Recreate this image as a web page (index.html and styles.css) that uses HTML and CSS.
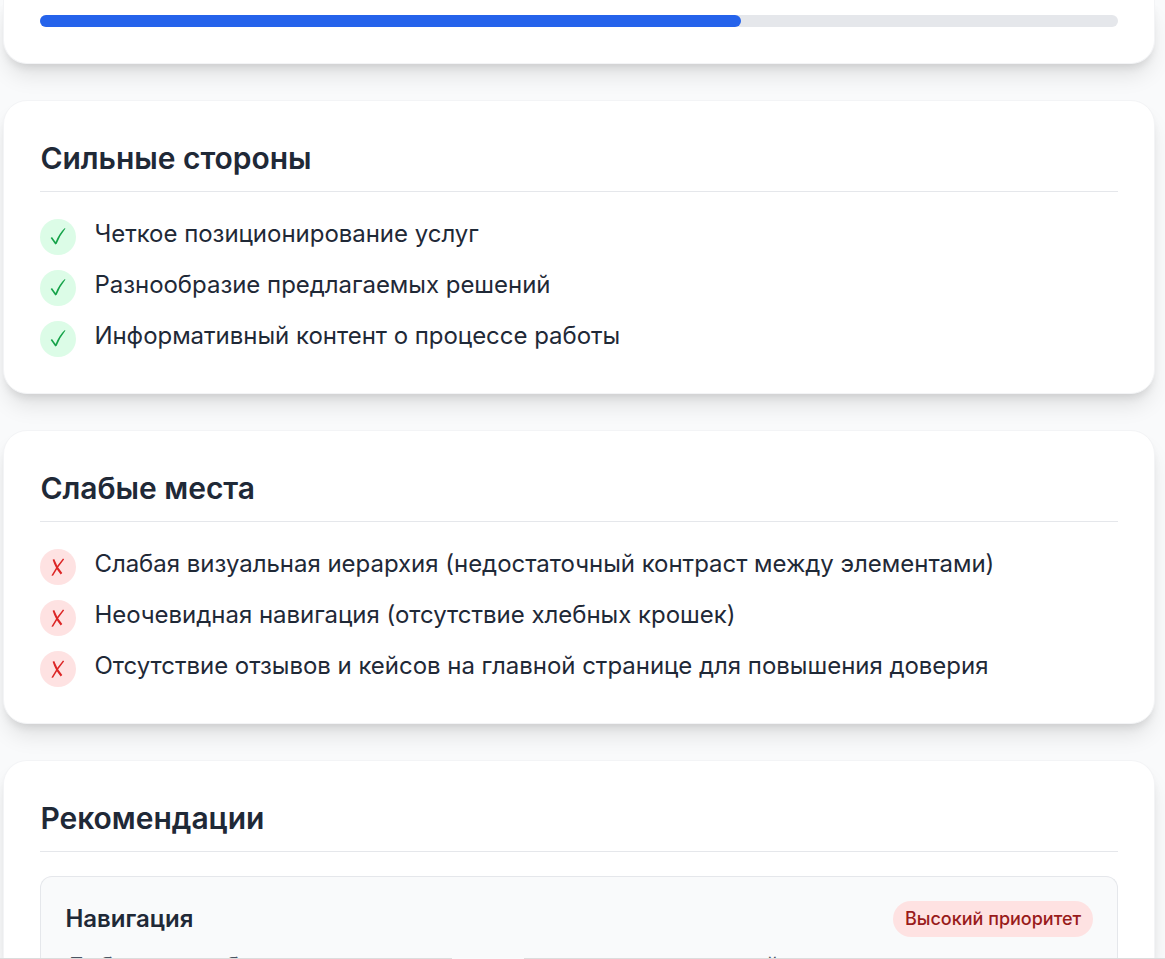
FILE: index.html
```
<!DOCTYPE html>
<html lang="ru">
<head>
  <meta charset="UTF-8">
  <title>Результаты анализа</title>
  <meta name="viewport" content="width=device-width, initial-scale=1.0">
  <link rel="stylesheet" href="styles.css">
</head>
<body>

  <svg width="0" height="0" class="icons">
    <symbol id="check" viewBox="0 0 36 36">
      <path d="M10.7 19 L12 18.1 L15.6 23 Q18.8 14.8 24.5 9.2 L25.5 9.4 Q20.2 15.8 16.7 24.8 L15.3 25.4 Z"/>
    </symbol>
    <symbol id="cross" viewBox="0 0 36 36">
      <path d="M12.6 10.7 L14.2 10.1 Q17.2 18.4 22.3 24 L20.7 25.4 Q15.4 19.4 12.6 10.7 Z"/>
      <path d="M23 9.6 L24.2 10.3 Q18.2 17.6 13 26.8 L11.4 26.5 Q16.4 17 23 9.6 Z"/>
    </symbol>
  </svg>

  <main class="report">
    <section class="card card-score">
      <div class="progress">
        <div class="progress-fill" style="width: 65%"></div>
      </div>
    </section>

    <section class="card">
      <h2>Сильные стороны</h2>
      <ul class="points good">
        <li><svg class="mark"><use href="#check"/></svg><p>Четкое позиционирование услуг</p></li>
        <li><svg class="mark"><use href="#check"/></svg><p>Разнообразие предлагаемых решений</p></li>
        <li><svg class="mark"><use href="#check"/></svg><p>Информативный контент о процессе работы</p></li>
      </ul>
    </section>

    <section class="card">
      <h2>Слабые места</h2>
      <ul class="points bad">
        <li><svg class="mark"><use href="#cross"/></svg><p>Слабая визуальная иерархия (недостаточный контраст между элементами)</p></li>
        <li><svg class="mark"><use href="#cross"/></svg><p>Неочевидная навигация (отсутствие хлебных крошек)</p></li>
        <li><svg class="mark"><use href="#cross"/></svg><p>Отсутствие отзывов и кейсов на главной странице для повышения доверия</p></li>
      </ul>
    </section>

    <section class="card card-advice">
      <h2>Рекомендации</h2>
      <div class="advice">
        <div class="advice-head">
          <h3>Навигация</h3>
          <span class="badge">Высокий приоритет</span>
        </div>
        <p class="advice-text">Добавить хлебные крошки для улучшения пользовательской</p>
      </div>
    </section>
  </main>

  <div class="bottom-line"><span></span><span></span></div>

</body>
</html>
```

FILE: styles.css
```
* {
  box-sizing: border-box;
  margin: 0;
  padding: 0;
}

body {
  height: 959px;
  overflow: hidden;
  font-family: Inter, "Noto Sans", sans-serif;
  font-size: 24px;
  line-height: 36px;
  color: #1f2937;
  background-color: #f9fafb;
}

.icons {
  display: none;
}

.report {
  display: flex;
  flex-direction: column;
  gap: 36px;
  height: 959px;
  padding: 0 9.8px 0 3.4px;
  overflow: hidden;
}

.card {
  flex: none;
  padding: 36px;
  background-color: #ffffff;
  border: 1px solid #f3f4f6;
  border-radius: 24px;
  box-shadow: 0 15px 22px -4px rgba(0, 0, 0, 0.1), 0 6px 9px -3px rgba(0, 0, 0, 0.1);
}

.card-score {
  height: 64px;
  padding-top: 15px;
  border-top: none;
  border-radius: 0 0 24px 24px;
}

.progress {
  height: 12px;
  background-color: #e5e7eb;
  border-radius: 6px;
}

.progress-fill {
  height: 12px;
  background-color: #2563eb;
  border-radius: 6px;
}

h2 {
  padding-bottom: 12px;
  margin-bottom: 24px;
  font-size: 30px;
  font-weight: 600;
  line-height: 42px;
  letter-spacing: -0.03px;
  border-bottom: 1px solid #e5e7eb;
}

.points {
  display: flex;
  flex-direction: column;
  gap: 12px;
  list-style: none;
}

.points li {
  display: flex;
  align-items: flex-start;
  letter-spacing: -0.03px;
}

.mark {
  flex: none;
  width: 36px;
  height: 36px;
  margin-top: 3px;
  margin-right: 18px;
  border-radius: 50%;
}

.good .mark {
  fill: #16a34a;
  background-color: #dcfce7;
}

.bad .mark {
  fill: #dc2626;
  background-color: #fee2e2;
}

.card-advice {
  padding-bottom: 0;
  border-bottom: none;
  border-radius: 24px 24px 0 0;
}

.advice {
  height: 83px;
  padding: 24px 24px 0;
  overflow: hidden;
  background-color: #f9fafb;
  border: 1px solid #e5e7eb;
  border-bottom: none;
  border-radius: 12px 12px 0 0;
}

.advice-head {
  display: flex;
  justify-content: space-between;
  align-items: center;
}

.advice-text {
  margin-top: 12px;
  color: #4b5563;
  letter-spacing: -0.2px;
  white-space: nowrap;
}

h3 {
  font-size: 24px;
  font-weight: 600;
}

.badge {
  padding: 6px 12px;
  font-size: 18px;
  font-weight: 500;
  line-height: 24px;
  color: #991b1b;
  background-color: #fee2e2;
  border-radius: 18px;
}

/* edge of the panel below, with a gap in it */
.bottom-line {
  position: fixed;
  left: 0;
  right: 0;
  bottom: 0;
  display: flex;
  gap: 72px;
}

.bottom-line span {
  width: 452px;
  height: 1px;
  background-color: #dcdcdc;
}

.bottom-line span:last-child {
  flex: 1;
}
```
